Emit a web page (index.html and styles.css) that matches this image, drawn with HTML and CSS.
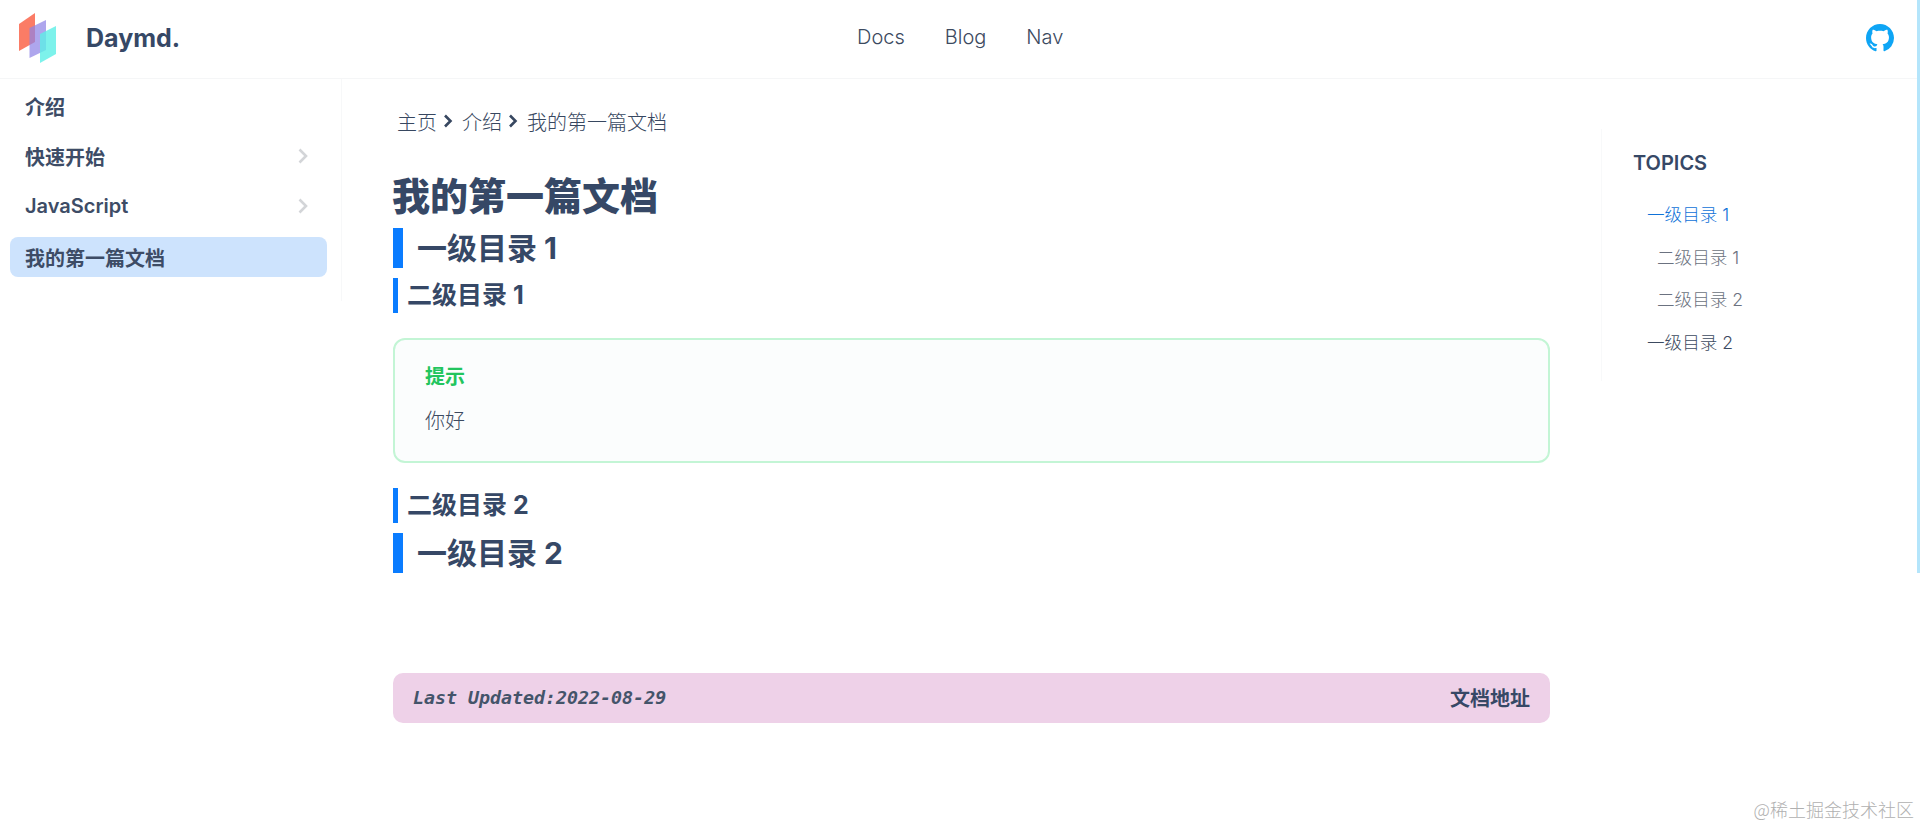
FILE: index.html
```html
<!DOCTYPE html>
<html lang="zh-CN">
<head>
<meta charset="utf-8">
<title>Daymd.</title>
<link rel="stylesheet" href="styles.css">
</head>
<body>
<header class="topbar">
  <a class="brand">
    <svg class="logo" viewBox="0 0 38 50" aria-hidden="true">
      <polygon points="0,11 16,0 16,29 0,38" fill="#fb7c66"/>
      <polygon points="10.500,15 27,7 27,37 10.500,45" fill="#8f84e6" fill-opacity=".72"/>
      <polygon points="21,21 37,13 37,41 21,50" fill="#5cefe6" fill-opacity=".8"/>
    </svg>
    <span class="brand-name">Daymd.</span>
  </a>
  <nav class="topnav">
    <a>Docs</a>
    <a>Blog</a>
    <a>Nav</a>
  </nav>
  <svg class="github" viewBox="0 0 16 16" aria-hidden="true">
    <path d="M8 0C3.58 0 0 3.58 0 8c0 3.54 2.29 6.53 5.47 7.59.4.07.55-.17.55-.38 0-.19-.01-.82-.01-1.49-2.01.37-2.53-.49-2.69-.94-.09-.23-.48-.94-.82-1.13-.28-.15-.68-.52-.01-.53.63-.01 1.08.58 1.23.82.72 1.21 1.87.87 2.33.66.07-.52.28-.87.51-1.07-1.78-.2-3.64-.89-3.64-3.95 0-.87.31-1.59.82-2.15-.08-.2-.36-1.02.08-2.12 0 0 .67-.21 2.2.82.64-.18 1.32-.27 2-.27s1.36.09 2 .27c1.53-1.04 2.2-.82 2.2-.82.44 1.1.16 1.92.08 2.12.51.56.82 1.27.82 2.15 0 3.07-1.87 3.75-3.65 3.95.29.25.54.73.54 1.48 0 1.07-.01 1.93-.01 2.2 0 .21.15.46.55.38A8.01 8.01 0 0 0 16 8c0-4.42-3.58-8-8-8z"/>
  </svg>
</header>
<div class="layout">
  <aside class="sidebar">
    <a class="side-item">介绍</a>
    <a class="side-item">快速开始
      <svg class="chev" viewBox="0 0 10 16" aria-hidden="true"><path d="M1.5 1.5l6.5 6.500-6.500 6.500"/></svg>
    </a>
    <a class="side-item">JavaScript
      <svg class="chev" viewBox="0 0 10 16" aria-hidden="true"><path d="M1.5 1.5l6.5 6.500-6.500 6.500"/></svg>
    </a>
    <a class="side-item active">我的第一篇文档</a>
  </aside>
  <main class="content">
    <div class="crumbs">
      <span>主页</span>
      <svg class="crumb-sep" viewBox="0 0 10 14" aria-hidden="true"><path d="M2 1.500l5.500 5.500-5.500 5.500"/></svg>
      <span>介绍</span>
      <svg class="crumb-sep" viewBox="0 0 10 14" aria-hidden="true"><path d="M2 1.500l5.500 5.500-5.500 5.500"/></svg>
      <span>我的第一篇文档</span>
    </div>
    <h1 class="title">我的第一篇文档</h1>
    <h2 class="h-one">一级目录 1</h2>
    <h3 class="h-two">二级目录 1</h3>
    <section class="tip">
      <p class="tip-title">提示</p>
      <p class="tip-body">你好</p>
    </section>
    <h3 class="h-two">二级目录 2</h3>
    <h2 class="h-one">一级目录 2</h2>
    <footer class="doc-foot">
      <span class="updated">Last Updated:2022-08-29</span>
      <a class="doc-link">文档地址</a>
    </footer>
  </main>
  <aside class="toc">
    <div class="toc-title">TOPICS</div>
    <a class="toc-item current">一级目录 1</a>
    <a class="toc-item sub">二级目录 1</a>
    <a class="toc-item sub">二级目录 2</a>
    <a class="toc-item">一级目录 2</a>
  </aside>
</div>
<div class="scroll-strip"></div>
<div class="watermark">@稀土掘金技术社区</div>
</body>
</html>
```
FILE: styles.css
```css
* { box-sizing: border-box; }
html, body { height: 100%; }
body {
  margin: 0;
  height: 827px;
  overflow: hidden;
  position: relative;
  background: #fff;
  color: #374760;
  font-family: Inter, "Noto Sans CJK SC", "Noto Sans", sans-serif;
}
p, h1, h2, h3 { margin: 0; }

.topbar {
  height: 79px;
  display: flex;
  align-items: center;
  position: relative;
  padding: 0 26px 0 19px;
  border-bottom: 1px solid #f5f6f7;
}
.brand { display: flex; align-items: center; }
.logo { width: 38px; height: 50px; margin-top: -3px; }
.brand-name {
  margin-left: 29px;
  margin-top: -3px;
  font-size: 25px;
  font-weight: 700;
  color: #364866;
}
.topnav {
  position: absolute;
  left: 857px;
  top: 25px;
  display: flex;
  gap: 40px;
  font-size: 20px;
  font-weight: 300;
  color: #3c4a60;
  line-height: 24px;
}
.github { width: 28px; height: 28px; margin-left: auto; margin-top: -3px; fill: #0ea5f5; }

.layout { display: flex; align-items: flex-start; }

.sidebar {
  width: 342px;
  height: 222px;
  flex: none;
  padding: 7px 14px 0 10px;
  border-right: 1px solid #f7f8f9;
  display: flex;
  flex-direction: column;
  gap: 10px;
}
.side-item {
  height: 40px;
  display: flex;
  align-items: center;
  justify-content: space-between;
  padding: 0 19px 0 15px;
  font-size: 20px;
  font-weight: 600;
  color: #3d4c66;
  border-radius: 8px;
}
.side-item.active { background: #cde3fd; margin-top: 1px; }
.chev { width: 10px; height: 16px; fill: none; stroke: #d3d5d8; stroke-width: 2.6; }

.content { width: 1157px; margin-left: 51px; flex: none; }
.crumbs {
  display: flex;
  align-items: center;
  height: 30px;
  margin-top: 27px;
  padding-left: 4px;
  font-size: 20px;
  font-weight: 300;
  color: #374760;
}
.crumb-sep { width: 10px; height: 14px; margin: 0 9px 0 6px; fill: none; stroke: #374760; stroke-width: 2.6; }
.title {
  margin-top: 36px;
  margin-left: -1px;
  font-size: 38px;
  line-height: 48px;
  font-weight: 800;
  color: #364866;
}
.h-one {
  height: 40px;
  margin: 8px 0 10px;
  padding-left: 14px;
  border-left: 10px solid #0a7cff;
  font-size: 30px;
  line-height: 40px;
  font-weight: 700;
  color: #364866;
}
.h-two {
  height: 35px;
  padding-left: 9px;
  border-left: 5px solid #0a7cff;
  font-size: 25px;
  line-height: 35px;
  font-weight: 700;
  color: #364866;
}
.h-two + .h-one { margin-top: 10px; }
.tip {
  height: 125px;
  margin: 25px 0;
  padding: 22px 30px 0;
  background: #fbfdfd;
  border: 2px solid #c3f5d5;
  border-radius: 12px;
}
.tip-title { font-size: 20px; line-height: 30px; font-weight: 700; color: #22c55e; }
.tip-body { margin-top: 14px; font-size: 20px; line-height: 30px; font-weight: 300; color: #3c4a60; }
.doc-foot {
  height: 50px;
  margin-top: 100px;
  padding: 0 20px 2px;
  display: flex;
  align-items: center;
  justify-content: space-between;
  background: #eed1e8;
  border-radius: 10px;
}
.updated {
  font-family: "DejaVu Sans Mono", "Liberation Mono", monospace;
  font-style: italic;
  font-weight: 700;
  font-size: 18.3px;
  color: #44546a;
}
.doc-link { font-size: 20px; font-weight: 700; color: #364866; }

.toc {
  width: 318px;
  height: 252px;
  flex: none;
  margin: 50px 0 0 51px;
  padding: 22px 0 0 31px;
  border-left: 1px solid #f8f9fa;
}
.toc-title { font-size: 20px; line-height: 24px; font-weight: 600; color: #364866; margin-bottom: 19px; }
.toc-item {
  display: block;
  height: 42.600px;
  line-height: 42.600px;
  padding-left: 14px;
  font-size: 17.6px;
  font-weight: 300;
  color: #3c4a60;
}
.toc-item.current { color: #0f72d8; }
.toc-item.sub { padding-left: 24px; color: #6b7280; }

.scroll-strip {
  position: absolute;
  top: 0;
  right: 0;
  width: 3px;
  height: 573px;
  background: #b4e5fb;
}
.watermark {
  position: absolute;
  right: 6px;
  bottom: 6px;
  font-family: "Noto Sans CJK SC", sans-serif;
  font-weight: 300;
  font-size: 18px;
  line-height: 24px;
  color: #b0b0b0;
}
```
